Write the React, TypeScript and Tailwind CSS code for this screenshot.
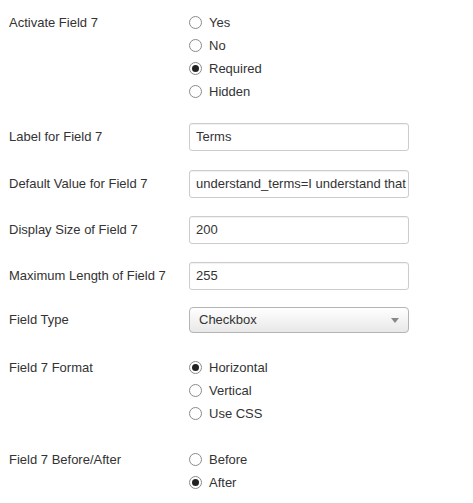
import React from "react";

function Radio({ label, checked }: { label: string; checked?: boolean }) {
  return (
    <div className="flex h-[23px] items-center">
      <span className="flex h-[13px] w-[13px] items-center justify-center rounded-full border border-[#8a8a8a] bg-white">
        {checked && <span className="h-[7px] w-[7px] rounded-full bg-[#222]" />}
      </span>
      <span className="ml-[7px]">{label}</span>
    </div>
  );
}

function RadioGroup({ label, options, checked, className }: { label: string; options: string[]; checked: number; className?: string }) {
  return (
    <div className={"flex " + (className ?? "")}>
      <div className="flex h-[23px] w-[189px] shrink-0 items-center pl-[9px]">{label}</div>
      <div className="flex flex-col">
        {options.map((o, i) => (
          <Radio key={o} label={o} checked={i === checked} />
        ))}
      </div>
    </div>
  );
}

function TextRow({ label, value, className }: { label: string; value: string; className?: string }) {
  return (
    <div className={"flex items-center " + (className ?? "")}>
      <div className="w-[189px] shrink-0 pl-[9px]">{label}</div>
      <div className="flex h-[28px] w-[220px] items-center overflow-hidden whitespace-nowrap rounded-[3px] border border-[#cccccc] bg-white px-[6px] shadow-[inset_0_1px_1px_rgba(0,0,0,0.06)]">
        {value}
      </div>
    </div>
  );
}

export default function App() {
  return (
    <div
      className="h-[503px] w-[473px] bg-white pt-[11px] text-[13px] text-[#333333]"
      style={{ fontFamily: '"Liberation Sans", Arial, sans-serif' }}
    >
      <RadioGroup label="Activate Field 7" options={["Yes", "No", "Required", "Hidden"]} checked={2} />
      <TextRow className="mt-[20px]" label="Label for Field 7" value="Terms" />
      <TextRow className="mt-[19px]" label="Default Value for Field 7" value="understand_terms=I understand that" />
      <TextRow className="mt-[18px]" label="Display Size of Field 7" value="200" />
      <TextRow className="mt-[18px]" label="Maximum Length of Field 7" value="255" />
      <div className="mt-[17px] flex items-center">
        <div className="w-[189px] shrink-0 pl-[9px]">Field Type</div>
        <div className="relative flex h-[26px] w-[220px] items-center rounded-[4px] border border-[#b4b4b4] bg-gradient-to-b from-white to-[#e8e8e8] pl-[9px]">
          Checkbox
          <span className="absolute right-[9px] top-[10px] h-0 w-0 border-x-[4px] border-t-[5px] border-x-transparent border-t-[#888888]" />
        </div>
      </div>
      <RadioGroup className="mt-[23px]" label="Field 7 Format" options={["Horizontal", "Vertical", "Use CSS"]} checked={0} />
      <RadioGroup className="mt-[23px]" label="Field 7 Before/After" options={["Before", "After"]} checked={1} />
    </div>
  );
}
